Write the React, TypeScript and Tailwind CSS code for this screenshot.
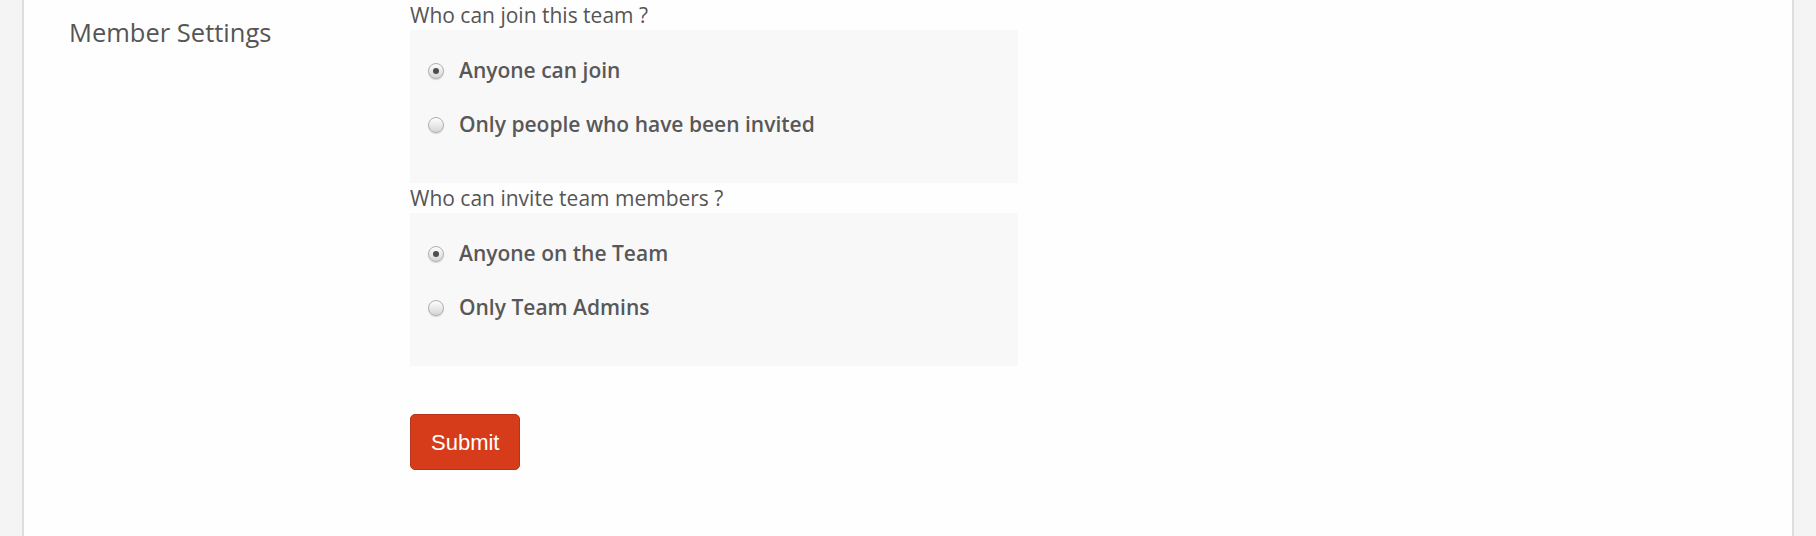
import React from "react";

type Option = { label: string; checked?: boolean };

const groups: { question: string; options: Option[] }[] = [
  {
    question: "Who can join this team ?",
    options: [
      { label: "Anyone can join", checked: true },
      { label: "Only people who have been invited" },
    ],
  },
  {
    question: "Who can invite team members ?",
    options: [
      { label: "Anyone on the Team", checked: true },
      { label: "Only Team Admins" },
    ],
  },
];

function Radio({ checked }: { checked?: boolean }) {
  return (
    <span className="flex h-[16px] w-[16px] shrink-0 items-center justify-center rounded-full border border-[#b0b0b0] bg-linear-to-b from-[#fdfdfd] to-[#d6d6d6] shadow-[0_1px_1px_rgba(0,0,0,0.15)]">
      {checked && <span className="h-[6px] w-[6px] rounded-full bg-[#4d4d4d]" />}
    </span>
  );
}

export default function App() {
  return (
    <div
      className="flex h-[536px] w-full bg-[#f4f4f4] text-[#555]"
      style={{ fontFamily: '"Open Sans", "Liberation Sans", sans-serif' }}
    >
      <div className="w-[22px] shrink-0" />
      <div className="flex flex-1 border-x-2 border-[#dedede] bg-[#fefefe]">
        {/* left label column */}
        <div className="w-[386px] shrink-0 pl-[45px] pt-[14px]">
          <h2 className="text-[25.5px] font-normal leading-[36px] text-[#555]">Member Settings</h2>
        </div>

        {/* form */}
        <div className="flex w-[608px] flex-col">
          {groups.map((g) => (
            <div key={g.question} className="flex flex-col">
              <p className="text-[21px] font-normal leading-[30px] text-[#555]">{g.question}</p>
              <div className="flex flex-col bg-[#f8f8f8] pl-[18px] pt-[14px] pb-[31px]">
                {g.options.map((o) => (
                  <label key={o.label} className="flex h-[54px] items-center gap-[15px]">
                    <Radio checked={o.checked} />
                    <span className="text-[21px] font-semibold text-[#585858]">{o.label}</span>
                  </label>
                ))}
              </div>
            </div>
          ))}

          <div className="pt-[48px]">
            <button
              className="h-[56px] rounded-[5px] border border-[#b5341a] bg-[#d63c19] px-5 text-[22px] text-white"
              style={{ fontFamily: '"Liberation Sans", Arial, sans-serif' }}
            >
              Submit
            </button>
          </div>
        </div>
      </div>
      <div className="w-[22px] shrink-0" />
    </div>
  );
}
